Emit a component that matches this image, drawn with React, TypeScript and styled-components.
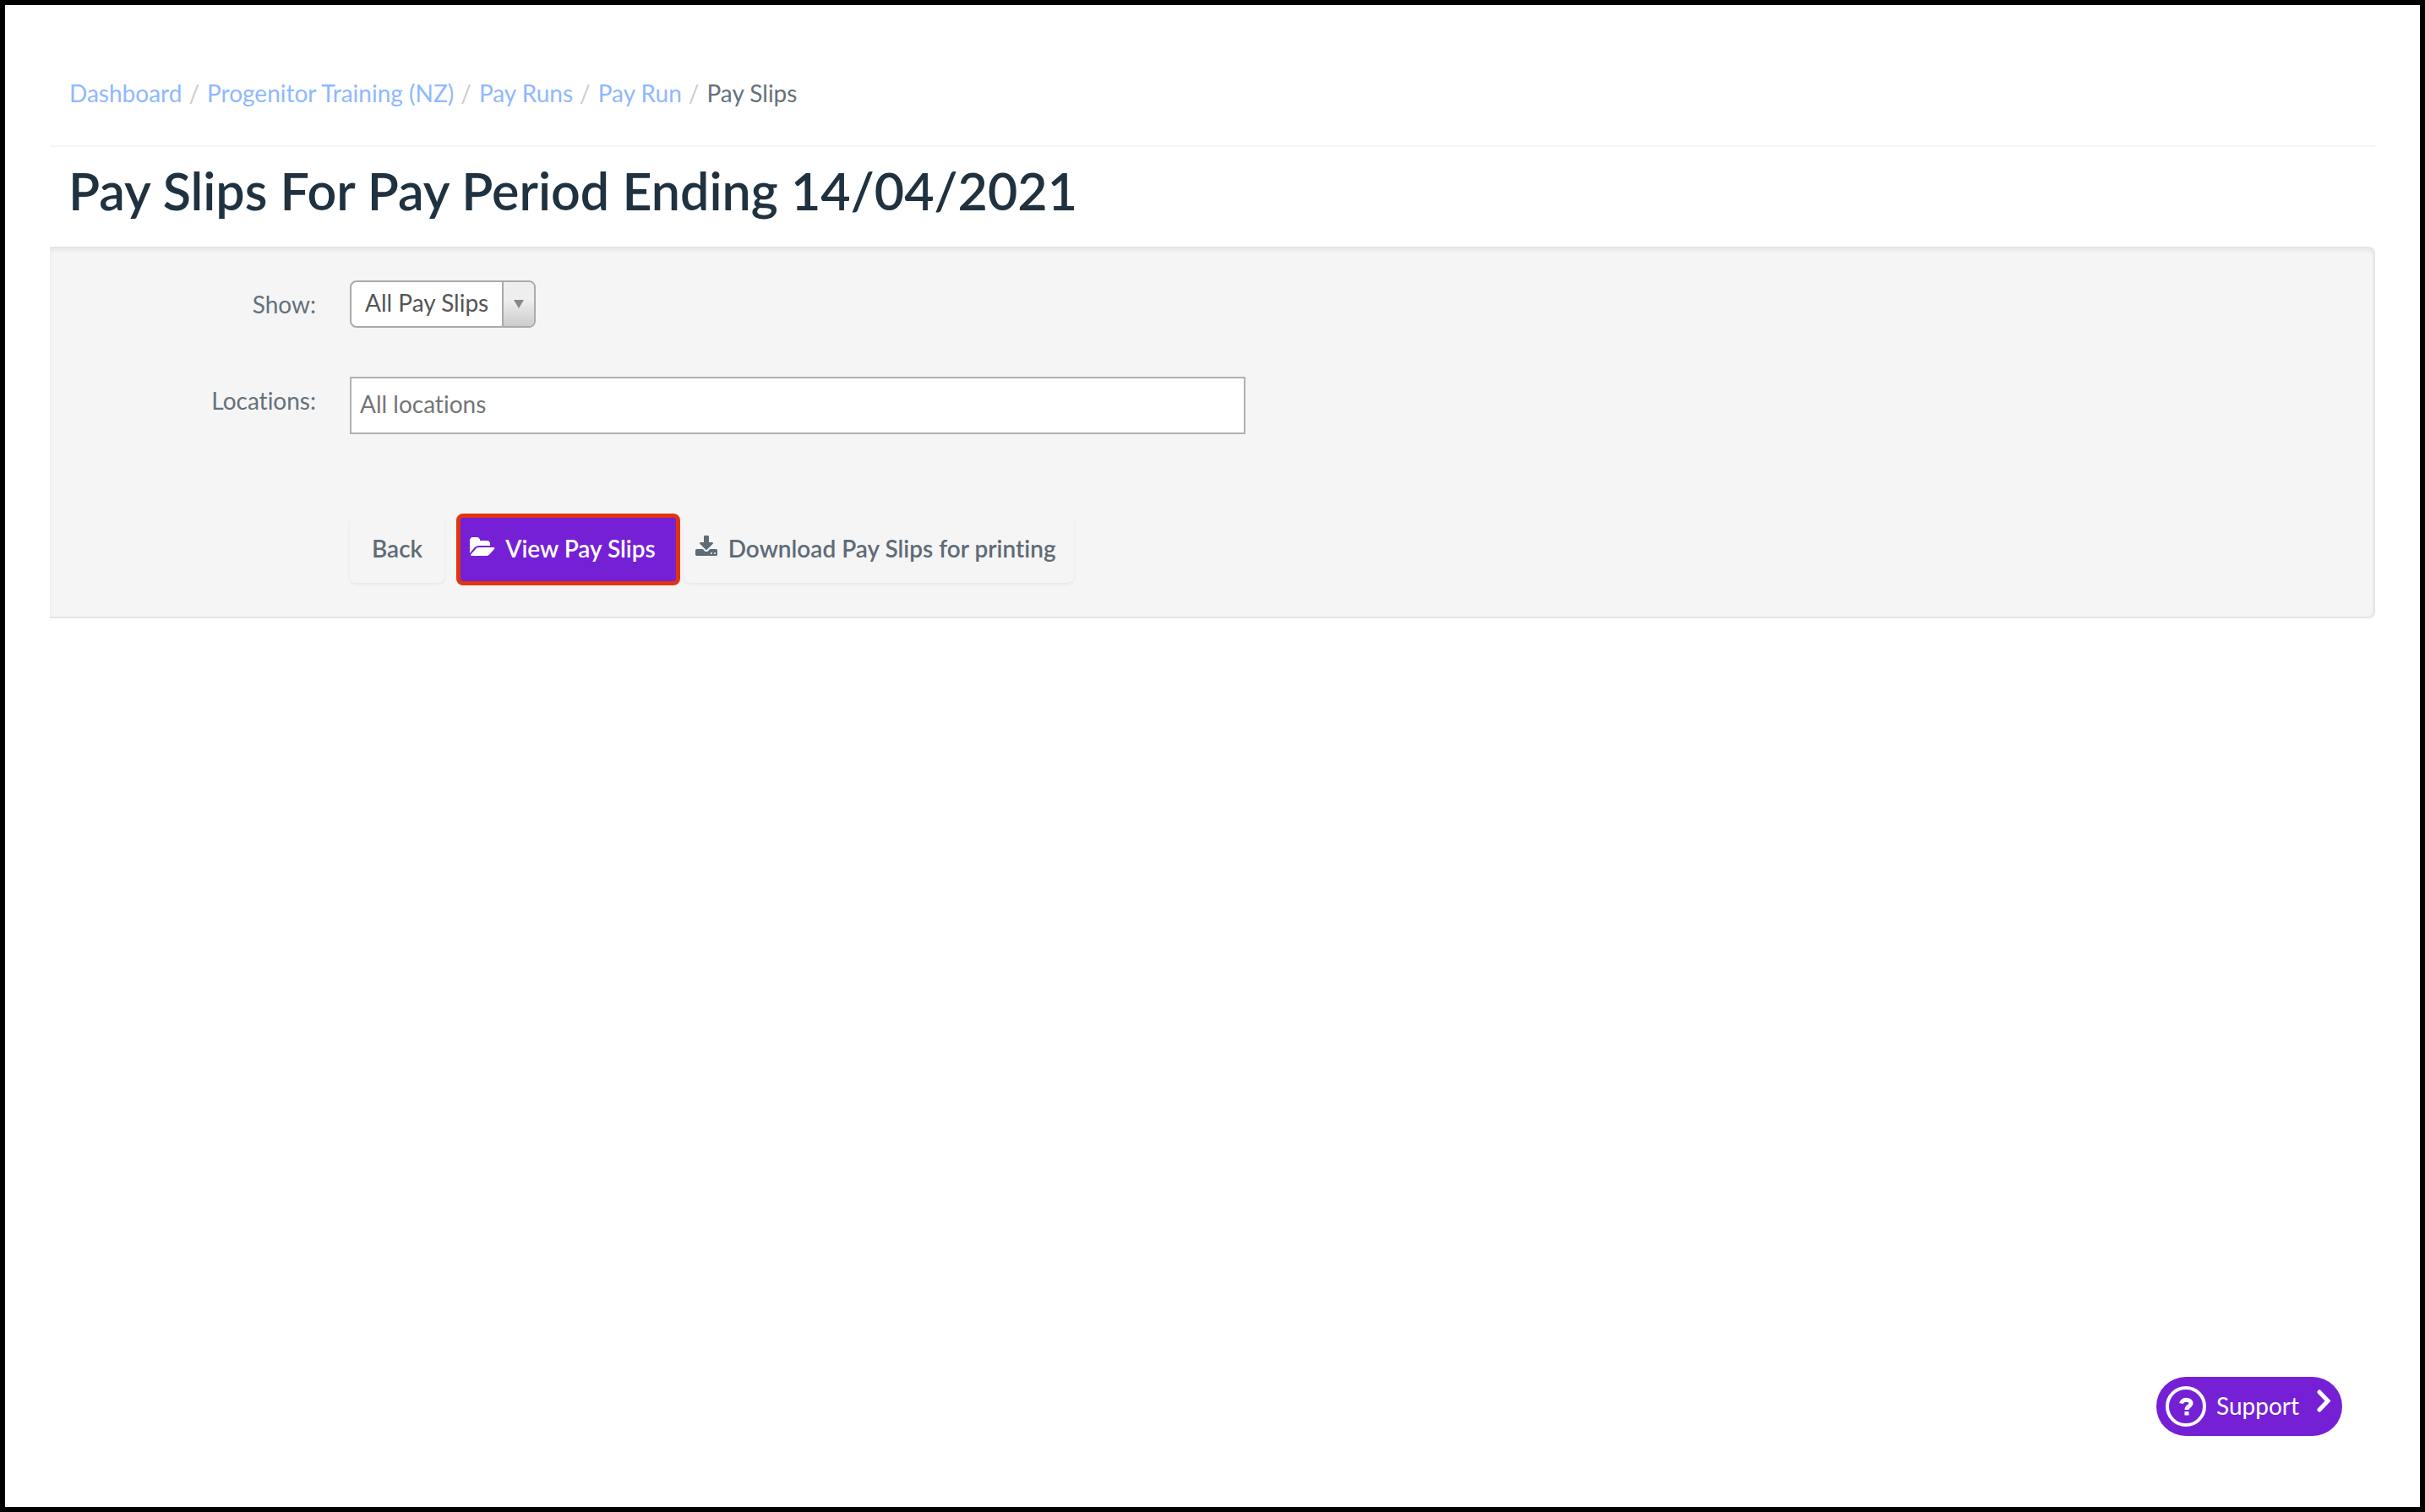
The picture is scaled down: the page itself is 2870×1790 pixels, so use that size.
import React from 'react';
import styled, { createGlobalStyle } from 'styled-components';

const GlobalStyle = createGlobalStyle`
  *, *::before, *::after { box-sizing: border-box; }
  body {
    margin: 0;
    background: #fff;
    color: #65717b;
    font-family: Lato, "Open Sans", sans-serif;
    font-size: 28px;
    font-variant-ligatures: none;
    line-height: 40px;
  }
  button, input, select { font: inherit; color: inherit; }
`;

const Frame = styled.div`
  min-height: 100vh;
  padding: 0 53px;
  border: 6px solid #000;
`;

const Breadcrumb = styled.nav`
  padding: 84px 23px 42px;
  border-bottom: 2px solid #f5f5f5;

  ol {
    display: flex;
    margin: 0;
    padding: 0;
    list-style: none;
  }

  li + li::before {
    content: "/";
    padding: 0 9px 0 8px;
    color: #ccc;
  }
`;

const Crumb = styled.a`
  color: #8fb8ff;
  text-decoration: none;
`;

const Title = styled.h1`
  margin: 0;
  padding: 12px 22px 26px;
  color: #20323f;
  font-size: 61px;
  font-weight: 600;
  line-height: 80px;
`;

const Panel = styled.form`
  display: grid;
  grid-template-columns: 315px minmax(0, 1060px);
  column-gap: 40px;
  align-items: start;
  padding: 38px 0 37px;
  border: 2px solid #e4e4e4;
  border-left: 0;
  border-radius: 0 8px 8px 0;
  background: #f5f5f5;
  box-shadow: inset 0 3px 4px rgba(0, 0, 0, 0.06);
`;

const Label = styled.label`
  padding-top: 8px;
  text-align: right;
`;

const SelectBox = styled.div`
  display: grid;
  grid-template-columns: 1fr 38px;
  justify-self: start;
  width: 220px;
  height: 56px;
  margin-bottom: 58px;
  border: 2px solid #aaa;
  border-radius: 8px;
  background: #fff;
  overflow: hidden;
`;

const Select = styled.select`
  grid-area: 1 / 1 / 2 / 3;
  padding: 0 40px 4px 16px;
  border: 0;
  background: transparent;
  color: #555;
  appearance: none;
`;

const SelectArrow = styled.span`
  grid-area: 1 / 2;
  display: grid;
  place-items: center;
  border-left: 2px solid #aaa;
  background: linear-gradient(#eee 40%, #ccc);
  pointer-events: none;

  &::before {
    content: "";
    border: 6px solid transparent;
    border-top: 10px solid #888;
    border-bottom: 0;
  }
`;

const LocationInput = styled.input`
  width: 100%;
  height: 68px;
  padding: 0 10px 4px;
  border: 2px solid #b0b0b0;
  background: #fff;

  &::placeholder { color: #757575; opacity: 1; }
`;

const Actions = styled.div`
  grid-column: 2;
  display: flex;
  align-items: center;
  gap: 4px;
  padding-top: 94px;
`;

const Button = styled.button<{ $primary?: boolean }>`
  display: flex;
  align-items: center;
  gap: 12px;
  height: ${p => (p.$primary ? '85px' : '79px')};
  padding: ${p => (p.$primary ? '0 24px 4px 11px' : '0 21px 4px 13px')};
  border: ${p => (p.$primary ? '5px solid #df350f' : '0')};
  border-radius: 8px;
  background: ${p => (p.$primary ? '#7620d6' : '#f5f5f5')};
  color: ${p => (p.$primary ? '#fff' : '#5f6b76')};
  font-weight: 600;
  white-space: nowrap;
  box-shadow: ${p => (p.$primary ? 'none' : '0 2px 4px rgba(0, 0, 0, 0.06)')};

  svg { margin-bottom: 2px; }
`;

const BackButton = styled(Button)`
  margin-right: 10px;
  padding: 0 26px 4px;
`;

const Support = styled.button`
  position: fixed;
  right: 98px;
  bottom: 90px;
  display: flex;
  align-items: center;
  height: 70px;
  padding: 0 11px;
  gap: 12px;
  border: 0;
  border-radius: 35px;
  background: #7620d6;
  color: #fff;
`;

const SupportText = styled.span`
  padding: 0 8px 2px 0;
`;

const FolderIcon = () => (
  <svg width="30" height="28" viewBox="0 0 1920 1792" fill="currentColor" aria-hidden="true">
    <path d="M1879 952q0 31-31 66l-336 396q-43 51-120.500 86.500t-143.500 35.500h-1088q-34 0-60.500-13t-26.500-43q0-31 31-66l336-396q43-51 120.500-86.500t143.500-35.500h1088q34 0 60.500 13t26.500 43zm-343-344v160h-832q-94 0-197 47.500t-164 119.500l-337 396-5 6q0-4-.5-12.500t-.5-12.500v-960q0-92 66-158t158-66h320q92 0 158 66t66 158v32h544q92 0 158 66t66 158z" />
  </svg>
);

const DownloadIcon = () => (
  <svg width="28" height="28" viewBox="0 0 1792 1792" fill="currentColor" aria-hidden="true">
    <path d="M1344 1344q0-26-19-45t-45-19-45 19-19 45 19 45 45 19 45-19 19-45zm256 0q0-26-19-45t-45-19-45 19-19 45 19 45 45 19 45-19 19-45zm128-224v320q0 40-28 68t-68 28h-1472q-40 0-68-28t-28-68v-320q0-40 28-68t68-28h465l135 136q58 56 136 56t136-56l136-136h464q40 0 68 28t28 68zm-325-569q17 41-14 70l-448 448q-18 19-45 19t-45-19l-448-448q-31-29-14-70 17-39 59-39h256v-448q0-26 19-45t45-19h256q26 0 45 19t19 45v448h256q42 0 59 39z" />
  </svg>
);

const HelpIcon = () => (
  <svg width="48" height="48" viewBox="0 0 48 48" fill="none" stroke="currentColor" aria-hidden="true">
    <circle cx="24" cy="24" r="22" strokeWidth="4" />
    <path d="M18.500 20.500C19.500 14.800 30 14.800 30 20.500c0 3.600-5 3.500-5 7.500" strokeWidth="5" />
    <path d="M25 30v4.500" strokeWidth="5" />
  </svg>
);

const ChevronIcon = () => (
  <svg width="20" height="40" viewBox="0 0 20 40" fill="none" stroke="currentColor" strokeWidth="5" strokeLinecap="round" aria-hidden="true">
    <path d="M4 3l10 10.500L4 24" />
  </svg>
);

const crumbs = ['Dashboard', 'Progenitor Training (NZ)', 'Pay Runs', 'Pay Run'];

export default function App() {
  return (
    <Frame>
      <GlobalStyle />
      <Breadcrumb aria-label="Breadcrumb">
        <ol>
          {crumbs.map(name => (
            <li key={name}><Crumb href="#">{name}</Crumb></li>
          ))}
          <li aria-current="page">Pay Slips</li>
        </ol>
      </Breadcrumb>
      <main>
        <Title>Pay Slips For Pay Period Ending 14/04/2021</Title>
        <Panel onSubmit={e => e.preventDefault()}>
          <Label htmlFor="show">Show:</Label>
          <SelectBox>
            <Select id="show"><option>All Pay Slips</option></Select>
            <SelectArrow />
          </SelectBox>
          <Label htmlFor="locations">Locations:</Label>
          <LocationInput id="locations" placeholder="All locations" />
          <Actions>
            <BackButton type="button">Back</BackButton>
            <Button type="submit" $primary><FolderIcon />View Pay Slips</Button>
            <Button type="button"><DownloadIcon />Download Pay Slips for printing</Button>
          </Actions>
        </Panel>
      </main>
      <Support type="button"><HelpIcon /><SupportText>Support</SupportText><ChevronIcon /></Support>
    </Frame>
  );
}
